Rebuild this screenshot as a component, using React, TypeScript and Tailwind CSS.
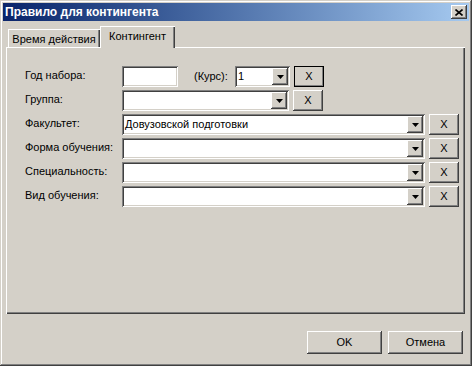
import React from "react";

const raised =
  "shadow-[inset_-1px_-1px_#404040,inset_1px_1px_#ffffff,inset_-2px_-2px_#808080,inset_2px_2px_#d4d0c8]";
const sunken =
  "shadow-[inset_1px_1px_#808080,inset_-1px_-1px_#ffffff,inset_2px_2px_#404040,inset_-2px_-2px_#d4d0c8]";

function Arrow() {
  return (
    <svg width="7" height="4" viewBox="0 0 7 4">
      <path d="M0 0h7L3.5 4z" fill="#000" />
    </svg>
  );
}

function Combo({ width, value }: { width: string; value?: string }) {
  return (
    <div className={`${sunken} ${width} h-[21px] bg-white flex items-center p-[2px]`}>
      <span className="flex-1 pl-[1px] truncate">{value}</span>
      <div className={`${raised} w-[16px] h-[17px] bg-[#d4d0c8] flex items-center justify-center`}>
        <Arrow />
      </div>
    </div>
  );
}

function ClearBtn({ focused }: { focused?: boolean }) {
  return (
    <button
      className={`${raised} ${
        focused ? "outline outline-1 outline-black -outline-offset-1" : ""
      } w-[30px] h-[21px] bg-[#d4d0c8] flex items-center justify-center text-[11px]`}>
      X
    </button>
  );
}

function Row({ label, children }: { label: string; children: React.ReactNode }) {
  return (
    <div className="flex items-center h-[21px]">
      <span className="w-[97px] -mt-[2px]">{label}</span>
      {children}
    </div>
  );
}

export default function App() {
  return (
    <div
      className={`w-[472px] h-[366px] bg-[#d4d0c8] p-[3px] flex flex-col text-[11px] text-black shadow-[inset_-1px_-1px_#404040,inset_1px_1px_#d4d0c8,inset_-2px_-2px_#808080,inset_2px_2px_#ffffff]`}
      style={{ fontFamily: '"Liberation Sans", Arial, sans-serif' }}>
      {/* title bar */}
      <div className="h-[18px] flex items-center justify-between pl-[2px] pr-[2px] bg-gradient-to-r from-[#0a246a] to-[#a6caf0]">
        <span className="text-white font-bold text-[12px]">Правило для контингента</span>
        <div className={`${raised} w-[16px] h-[14px] bg-[#d4d0c8] flex items-center justify-center`}>
          <svg width="8" height="7" viewBox="0 0 8 7">
            <path d="M0.5 0.5l7 6M7.5 0.5l-7 6" stroke="#000" strokeWidth="1.6" />
          </svg>
        </div>
      </div>

      {/* tabs */}
      <div className="mt-[5px] ml-[3px] flex items-end h-[21px]">
        <div className="ml-[2px] w-[92px] h-[18px] flex items-center justify-center pt-[2px] shadow-[inset_1px_1px_#ffffff,inset_-1px_0_#404040,inset_-2px_0_#808080]">
          Время действия
        </div>
        <div className="relative z-10 w-[75px] h-[22px] -mb-[1px] bg-[#d4d0c8] flex items-center justify-center pb-[2px] shadow-[inset_1px_1px_#ffffff,inset_-1px_0_#404040,inset_-2px_0_#808080]">
          Контингент
        </div>
      </div>

      {/* panel */}
      <div className="ml-[3px] w-[459px] h-[267px] pt-[19px] pl-[19px] shadow-[inset_1px_1px_#ffffff,inset_-1px_-1px_#404040,inset_-2px_-2px_#808080] flex flex-col gap-[3px]">
        <Row label="Год набора:">
          <div className={`${sunken} w-[56px] h-[21px] bg-white`} />
          <span className="ml-[16px] w-[41px]">(Курс):</span>
          <Combo width="w-[55px]" value="1" />
          <div className="ml-[4px]">
            <ClearBtn focused />
          </div>
        </Row>
        <Row label="Группа:">
          <Combo width="w-[167px]" />
          <div className="ml-[4px]">
            <ClearBtn />
          </div>
        </Row>
        {["Факультет:", "Форма обучения:", "Специальность:", "Вид обучения:"].map((l, i) => (
          <Row key={l} label={l}>
            <Combo width="w-[303px]" value={i === 0 ? "Довузовской подготовки" : undefined} />
            <div className="ml-[4px]">
              <ClearBtn />
            </div>
          </Row>
        ))}
      </div>

      {/* buttons */}
      <div className="ml-[3px] w-[459px] mt-[17px] flex justify-end gap-[6px] pr-[2px]">
        <button className={`${raised} w-[75px] h-[23px] bg-[#d4d0c8] text-[11px]`}>OK</button>
        <button className={`${raised} w-[75px] h-[23px] bg-[#d4d0c8] text-[11px]`}>Отмена</button>
      </div>
    </div>
  );
}
